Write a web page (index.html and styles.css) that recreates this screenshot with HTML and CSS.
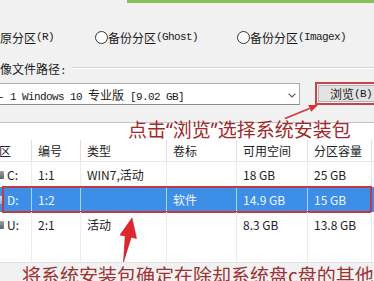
FILE: index.html
```html
<!DOCTYPE html>
<html lang="zh-CN">
<head>
<meta charset="utf-8">
<link rel="stylesheet" href="styles.css">
</head>
<body>
<div class="page">
  <div class="topbar"><div class="green"></div></div>
  <div class="radios ss">
    <span class="opt first">还原分区<span class="lt">(R)</span></span>
    <span class="opt o2"><span class="radio"></span>备份分区<span class="lt">(Ghost)</span></span>
    <span class="opt o3"><span class="radio"></span>备份分区<span class="lt">(Imagex)</span></span>
  </div>
  <div class="pathlabel ss"><span class="lbl">映像文件路径<span class="lt">:</span></span><span class="rule"></span></div>
  <div class="pathrow ss">
    <div class="combo">
      <span class="ctext"><span class="lt">- 1 Windows 10 </span>专业版<span class="lt"> [9.02 GB]</span></span>
      <svg class="chev" width="8" height="5" viewBox="0 0 8 5"><polyline points="0.6,0.6 4,4 7.4,0.6" fill="none" stroke="#5a5a5a" stroke-width="1.2"/></svg>
    </div>
    <div class="browse"><div class="btn">浏览<span class="lt">(B)</span></div></div>
  </div>
  <div class="list">
    <div class="row head">
      <span><span class="cut">分区</span></span><span>编号</span><span>类型</span><span>卷标</span><span>可用空间</span><span>分区容量</span><span></span>
    </div>
    <div class="row">
      <span><i class="ico"></i>C:</span><span>1:1</span><span>WIN7,活动</span><span></span><span>18 GB</span><span>25 GB</span><span></span>
    </div>
    <div class="row sel">
      <span><i class="ico light"></i>D:</span><span>1:2</span><span></span><span>软件</span><span>14.9 GB</span><span>15 GB</span><span></span>
      <div class="mark"></div>
    </div>
    <div class="row">
      <span><i class="ico"></i>U:</span><span>2:1</span><span>活动</span><span></span><span>8.3 GB</span><span>13.8 GB</span><span></span>
    </div>
    <div class="row">
      <span></span><span></span><span></span><span></span><span></span><span></span><span></span>
    </div>
  </div>
  <div class="note2">将系统安装包确定在除却系统盘c盘的其他</div>
  <div class="note1">点击“浏览”选择系统安装包</div>
  <svg class="arrows" width="374" height="281" viewBox="0 0 374 281">
    <line x1="285" y1="118.5" x2="309.5" y2="108.6" stroke="#d8333a" stroke-width="1.6"/>
    <polygon points="318,105 311.2,111.8 308.2,104.9" fill="#d8333a"/>
    <polygon points="132,218 136.5,238.5 131.2,237.2 123.5,262 125.2,236 120,235" fill="#e0262d" stroke="#b81d24" stroke-width="0.6"/>
  </svg>
</div>
</body>
</html>
```

FILE: styles.css
```css
* { box-sizing: border-box; }
html, body { margin: 0; padding: 0; }
body {
  background: #f1f1f1;
  font-family: "Noto Sans CJK SC", sans-serif;
  color: #1e1e1e;
}
.page {
  position: relative;
  width: 374px;
  height: 281px;
  overflow: hidden;
}
.topbar { height: 3px; display: flex; }
.green { margin-left: 127px; flex: 1; background: #88c15c; }

.ss { font-size: 12px; color: #1a1a1a; }
.lt {
  font-family: "Liberation Mono", monospace;
  font-size: 11px;
  letter-spacing: -0.6px;
}

.radios {
  display: flex;
  align-items: center;
  height: 24px;
  margin-top: 22px;
  white-space: nowrap;
}
.opt { display: flex; align-items: center; }
.first { margin-left: -12px; }
.o2 { margin-left: 41px; }
.o3 { margin-left: 39px; }
.radio {
  width: 13px;
  height: 13px;
  border: 1px solid #333;
  border-radius: 50%;
  background: #fff;
  flex: none;
}

.pathlabel {
  display: flex;
  align-items: center;
  height: 16px;
  margin-top: 11px;
  white-space: nowrap;
}
.lbl { margin-left: -12px; }
.rule {
  flex: 1;
  height: 2px;
  border-top: 1px solid #d6d6d6;
  border-bottom: 1px solid #fff;
  margin-left: 6px;
}

.pathrow {
  display: flex;
  align-items: flex-start;
  height: 23px;
  margin-top: 6px;
  white-space: nowrap;
}
.combo {
  flex: none;
  margin-left: -30px;
  width: 330px;
  height: 22px;
  margin-top: 1px;
  background: #fff;
  border: 1px solid #acacac;
  border-bottom-color: #8a8a8a;
  display: flex;
  align-items: center;
  padding-left: 27px;
}
.ctext { flex: 1; }
.chev { margin-right: 3px; margin-top: 2px; }
.browse {
  flex: none;
  margin-left: 15px;
  width: 70px;
  height: 23px;
  border: 2px solid #c6444a;
  padding: 1px;
}
.btn {
  height: 100%;
  background: #e3e3e3;
  border: 1px solid #b4b4b4;
  padding-left: 11px;
  display: flex;
  align-items: center;
}

.list {
  margin-top: 17px;
  background: #fff;
  border-top: 1px solid #c4c4c4;
  border-bottom: 1px solid #e2e2e2;
  padding-top: 17px;
  font-size: 12px;
  color: #222;
}
.row {
  display: grid;
  grid-template-columns: 32px 49px 86px 70px 71px 64px 2px;
  height: 25px;
  position: relative;
}
.row > span {
  border-right: 1px solid #ececec;
  padding-left: 6px;
  display: flex;
  align-items: center;
  white-space: nowrap;
  overflow: visible;
}
.row > span:first-child { padding-left: 0; }
.row > span:last-child { border-right: none; }
.head { height: 22px; border-bottom: 1px solid #e8e8e8; }
.head > span { border-right-color: #e0e0e0; }
.cut { margin-left: -13px; }
.ico {
  display: inline-block;
  width: 10px;
  height: 8px;
  margin-left: -6px;
  margin-right: 3px;
  background: linear-gradient(#9aa0a8, #5d636b);
  border-radius: 1px;
}
.ico.light { background: linear-gradient(#cfe4f8, #8fb6dc); }
.sel { background: #3c8ee6; color: #f2f8ff; }
.sel > span { border-right-color: #a8d2ff; }
.mark {
  position: absolute;
  left: 2px;
  right: 2px;
  top: -1px;
  bottom: -1px;
  border: 2px solid #c23a40;
}

.note2 {
  margin-top: 1px;
  padding-left: 22px;
  font-size: 19px;
  line-height: 22px;
  color: #9d3133;
  white-space: nowrap;
}
.note1 {
  position: absolute;
  left: 128px;
  top: 119px;
  font-family: "Noto Sans", "Noto Sans CJK SC", sans-serif;
  font-size: 19px;
  line-height: 22px;
  color: #a0292b;
  white-space: nowrap;
}
.arrows {
  position: absolute;
  left: 0;
  top: 0;
  pointer-events: none;
}
```
